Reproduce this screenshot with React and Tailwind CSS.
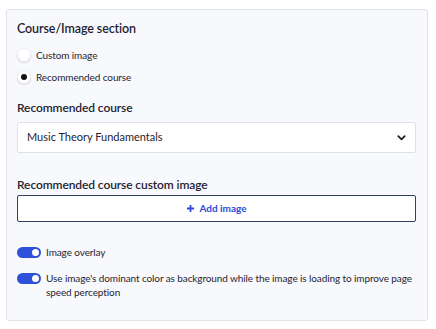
export default function App() {
  return (
    <div className="w-[436px] h-[329px] bg-white pt-[9px] px-[6px] font-['Lato',sans-serif] text-[#1f2330]">
      <div className="w-[422px] h-[312px] rounded-[3px] border border-[#e1e3ea] bg-[#f8f9fd] px-[10px] pt-[10px]">
        <div className="text-[12.5px] font-semibold leading-[18px] tracking-[-0.1px]">Course/Image section</div>
        <div className="mt-[10px] flex flex-col gap-[8px]">
          <label className="flex items-center h-[14px] gap-[5px] text-[10px] tracking-[-0.1px]">
            <span className="w-[14px] h-[14px] rounded-full bg-white border border-[#eceef2] shadow-[0_1px_2px_rgba(0,0,0,0.12)]" />
            <span>Custom image</span>
          </label>
          <label className="flex items-center h-[14px] gap-[5px] text-[10px] tracking-[-0.1px]">
            <span className="w-[14px] h-[14px] rounded-full bg-white border border-[#eceef2] shadow-[0_1px_2px_rgba(0,0,0,0.12)] flex items-center justify-center">
              <span className="w-[6px] h-[6px] rounded-full bg-[#111]" />
            </span>
            <span>Recommended course</span>
          </label>
        </div>
        <div className="mt-[15px] text-[12px] font-semibold leading-[18px] tracking-[-0.1px]">Recommended course</div>
        <div className="mt-[5px] h-[31px] w-[399px] rounded-[2px] border border-[#dfe1e6] bg-white flex items-center justify-between pl-[9px] pr-[8px] text-[11px]">
          <span>Music Theory Fundamentals</span>
          <svg width="11" height="11" viewBox="0 0 24 24" fill="none" stroke="#222" strokeWidth="4" strokeLinecap="round" strokeLinejoin="round">
            <path d="M5 9l7 7 7-7" />
          </svg>
        </div>
        <div className="mt-[23px] text-[12px] font-semibold leading-[18px] tracking-[-0.1px]">Recommended course custom image</div>
        <button className="mt-[1px] h-[27px] w-[399px] rounded-[2px] border border-[#33405e] bg-white flex items-center justify-center gap-[4px] text-[10px] font-bold text-[#2c4bd6]">
          <svg width="9" height="9" viewBox="0 0 10 10" fill="none" stroke="#2c4bd6" strokeWidth="2">
            <path d="M5 1v8M1 5h8" />
          </svg>
          Add image
        </button>
        <div className="mt-[23px] flex flex-col gap-[12px]">
          <div className="flex items-center gap-[5px] text-[10px] leading-[14px] tracking-[-0.1px]">
            <span className="w-[24px] h-[11px] rounded-full bg-[#2f50d8] flex items-center justify-end pr-[2px] shrink-0">
              <span className="w-[7px] h-[7px] rounded-full bg-white" />
            </span>
            <span>Image overlay</span>
          </div>
          <div className="flex items-start gap-[5px] text-[10px] leading-[14px] tracking-[-0.1px]">
            <span className="mt-[1.5px] w-[24px] h-[11px] rounded-full bg-[#2f50d8] flex items-center justify-end pr-[2px] shrink-0">
              <span className="w-[7px] h-[7px] rounded-full bg-white" />
            </span>
            <span className="w-[368px]">Use image's dominant color as background while the image is loading to improve page speed perception</span>
          </div>
        </div>
      </div>
    </div>
  );
}
